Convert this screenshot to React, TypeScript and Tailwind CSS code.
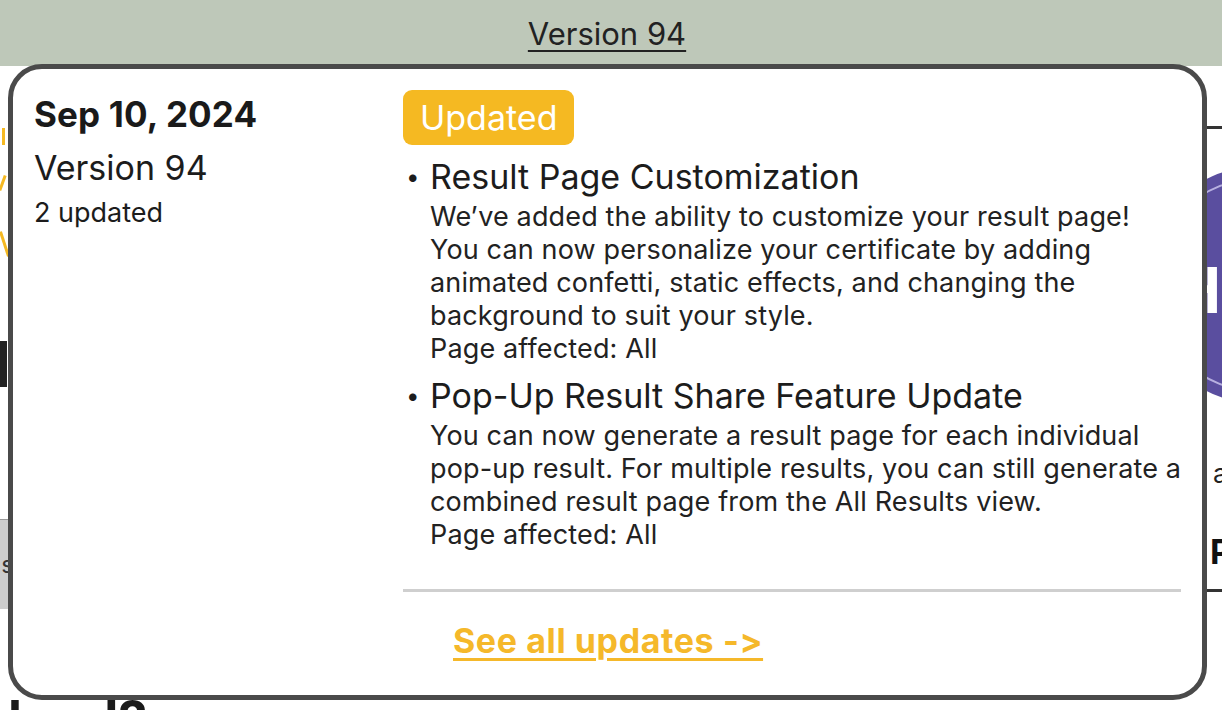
import React from "react";

const updates = [
  {
    title: "Result Page Customization",
    lines: [
      "We’ve added the ability to customize your result page!",
      "You can now personalize your certificate by adding",
      "animated confetti, static effects, and changing the",
      "background to suit your style.",
      "Page affected: All",
    ],
  },
  {
    title: "Pop-Up Result Share Feature Update",
    lines: [
      "You can now generate a result page for each individual",
      "pop-up result. For multiple results, you can still generate a",
      "combined result page from the All Results view.",
      "Page affected: All",
    ],
  },
];

const App = () => {
  return (
    <div className="relative h-[710px] w-full overflow-hidden bg-white font-['Inter','Liberation_Sans',sans-serif] text-[#1c1c1c]">
      {/* page behind the popup */}
      <header className="flex h-[66px] items-center justify-center bg-[#bec8b9]">
        <a href="#" className="-ml-[8px] text-[31px] leading-none text-[#222] underline decoration-2 underline-offset-[5px]">
          Version 94
        </a>
      </header>

      <main className="flex h-[644px]">
        <div className="flex w-[8px] shrink-0 flex-col">
          <div className="ml-[2px] mt-[62px] h-[17px] w-[3px] bg-[#f5b922]" />
          <div className="ml-[1px] mt-[30px] h-[16px] w-[3px] rotate-[20deg] bg-[#f5b922]" />
          <div className="ml-[3px] mt-[40px] h-[26px] w-[3px] rotate-[-18deg] bg-[#f5b922]" />
          <div className="mt-[84px] h-[46px] w-[7px] bg-[#222]" />
          <div className="mt-[132px] flex h-[90px] w-[8px] items-center justify-end overflow-hidden border-t border-[#999] bg-[#cdcdcd]">
            <span className="-mr-[6px] text-[24px] leading-none text-[#333]">s</span>
          </div>
        </div>

        <div className="flex-1">
          <p className="mt-[628px] text-[52px] font-bold leading-none text-[#1a1a1a]">hool?</p>
        </div>

        <div className="flex w-[82px] shrink-0 flex-col overflow-hidden">
          <div className="ml-[60px] mt-[60px] h-[3px] bg-[#333]" />
          <svg className="mt-[38px] shrink-0" width="236" height="236" viewBox="0 0 236 236">
            <circle cx="118" cy="118" r="118" fill="#5a4e9f" />
            <circle cx="118" cy="118" r="106" fill="none" stroke="#b7b0e0" strokeWidth="2" />
            <text x="34" y="146" fill="#fff" fontSize="63" fontWeight="700" fontFamily="Inter, Liberation Sans, sans-serif">
              H
            </text>
          </svg>
          <span className="ml-[73px] mt-[58px] text-[26px] leading-none text-[#222]">a</span>
          <span className="ml-[70px] mt-[48px] text-[34px] font-bold leading-none text-[#111]">P</span>
          <div className="ml-[60px] mt-[20px] h-[3px] bg-[#333]" />
        </div>
      </main>

      {/* changelog popup */}
      <div className="absolute left-[8px] top-[64px] grid h-[636px] w-[1199px] grid-cols-[369px_1fr] rounded-[34px] border-[5px] border-[#4a4a4a] bg-white px-[21px] pt-[21px]">
        <div className="flex flex-col">
          <p className="mt-[4px] text-[35px] font-bold leading-[40px] tracking-[0.15px] text-[#1a1a1a]">Sep 10, 2024</p>
          <p className="mt-[14px] text-[34px] leading-[40px]">Version 94</p>
          <p className="mt-[9px] text-[27px] leading-[32px]">2 updated</p>
        </div>

        <div className="flex flex-col">
          <span className="inline-flex h-[55px] items-center self-start rounded-[9px] bg-[#f5b922] px-[17px] text-[34px] leading-none text-white">
            Updated
          </span>

          <ul className="mt-[9px] flex flex-col gap-[8px]">
            {updates.map((u) => (
              <li key={u.title} className="flex">
                <span className="w-[27px] shrink-0 pl-[3px] text-[24px] leading-[46px]">•</span>
                <div>
                  <p className="whitespace-nowrap text-[34px] leading-[46px]">{u.title}</p>
                  {u.lines.map((line) => (
                    <p key={line} className="whitespace-nowrap text-[27px] leading-[33px] tracking-[0.15px] text-[#222]">
                      {line}
                    </p>
                  ))}
                </div>
              </li>
            ))}
          </ul>

          <div className="mt-[38px] h-[3px] bg-[#cfcfcf]" />

          <a
            href="#"
            className="mt-[29px] self-start pl-[50px] text-[34px] font-bold leading-[40px] tracking-[0.6px] text-[#f5b82a] underline decoration-[3px] underline-offset-[5px] [font-feature-settings:'calt'_0]"
          >
            See all updates -&gt;
          </a>
        </div>
      </div>
    </div>
  );
};

export default App;
